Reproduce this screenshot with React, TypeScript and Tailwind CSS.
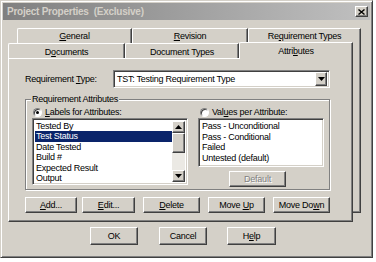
import React from "react";

const raised =
  "border border-t-white border-l-white border-r-[#404040] border-b-[#404040] shadow-[inset_-1px_-1px_0_#808080] bg-[#d4d0c8]";
const sunken =
  "border border-t-[#808080] border-l-[#808080] border-r-white border-b-white shadow-[inset_1px_1px_0_#404040,inset_-1px_-1px_0_#d4d0c8]";

function U({ c }: { c: string }) {
  return <span className="underline underline-offset-[1px] decoration-1">{c}</span>;
}

function Btn({ cls, children, disabled }: { cls: string; children: React.ReactNode; disabled?: boolean }) {
  return (
    <div
      className={`${raised} ${cls} flex items-center justify-center shrink-0 ${
        disabled ? "text-[#808080] [text-shadow:1px_1px_0_#ffffff]" : ""
      }`}
    >
      {children}
    </div>
  );
}

function Radio({ on }: { on?: boolean }) {
  return (
    <div className="w-[9px] h-[9px] rounded-full border border-t-[#808080] border-l-[#808080] border-r-white border-b-white bg-white flex items-center justify-center shrink-0 shadow-[inset_1px_1px_0_#404040]">
      {on ? <div className="w-[3px] h-[3px] rounded-full bg-black" /> : null}
    </div>
  );
}

function TriDown() {
  return (
    <svg width="7" height="4" viewBox="0 0 7 4">
      <polygon points="0,0 7,0 3.5,4" fill="#000" />
    </svg>
  );
}
function TriUp() {
  return (
    <svg width="7" height="4" viewBox="0 0 7 4">
      <polygon points="0,4 7,4 3.5,0" fill="#000" />
    </svg>
  );
}

export default function App() {
  const leftItems = ["Tested By", "Test Status", "Date Tested", "Build #", "Expected Result", "Output"];
  const rightItems = ["Pass - Unconditional", "Pass - Conditional", "Failed", "Untested (default)"];
  return (
    <div className="w-[376px] h-[262px] bg-white font-['Liberation_Sans',Arial,sans-serif] text-[9px] tracking-[-0.25px] text-black leading-none">
      <div className="w-[373px] h-[258px] bg-[#d4d0c8] border border-t-[#d4d0c8] border-l-[#d4d0c8] border-r-[#404040] border-b-[#404040] shadow-[inset_1px_1px_0_#ffffff,inset_-1px_-1px_0_#808080] p-[2px] flex flex-col">
        {/* Title bar */}
        <div className="h-[17px] flex items-center bg-gradient-to-r from-[#808080] to-[#c0c0c0] pl-[4px] pr-[2px]">
          <span className="font-bold text-[10px] text-[#d4d0c8] whitespace-pre flex-1">Project Properties  (Exclusive)</span>
          <div className={`${raised} w-[13px] h-[11px] flex items-center justify-center`}>
            <svg width="7" height="6" viewBox="0 0 7 6">
              <path d="M0.5 0.5 L6.5 5.5 M6.5 0.5 L0.5 5.5" stroke="#000" strokeWidth="1.4" />
            </svg>
          </div>
        </div>

        {/* Tab control */}
        <div className="mt-[8px] ml-[5px] w-[353px] flex flex-col">
          {/* back row */}
          <div className="ml-[9px] flex h-[15px]">
            <div className="w-[115px] h-full border-t border-l border-t-white border-l-white border-r border-r-[#404040] shadow-[inset_-1px_0_0_#808080] rounded-tl-[2px] flex items-center justify-center">
              <span>
                <U c="G" />eneral
              </span>
            </div>
            <div className="w-[116px] h-full border-t border-l border-t-white border-l-white border-r border-r-[#404040] shadow-[inset_-1px_0_0_#808080] rounded-tl-[2px] flex items-center justify-center">
              <span>
                <U c="R" />evision
              </span>
            </div>
            <div className="w-[113px] h-full border-t border-l border-t-white border-l-white border-r border-r-[#404040] shadow-[inset_-1px_0_0_#808080] rounded-tl-[2px] flex items-center justify-center">
              <span>
                Re<U c="q" />uirement Types
              </span>
            </div>
          </div>

          <div className="flex">
            <div className="w-[345px] flex flex-col">
              {/* front row */}
              <div className="flex h-[15px] items-start">
                <div className="w-[117px] h-full border-t border-l border-t-white border-l-white border-r border-r-[#404040] shadow-[inset_-1px_0_0_#808080] rounded-tl-[2px] flex items-center justify-center pt-[2px]">
                  <span>
                    D<U c="o" />cuments
                  </span>
                </div>
                <div className="w-[114px] h-full border-t border-l border-t-white border-l-white border-r border-r-[#404040] shadow-[inset_-1px_0_0_#808080] rounded-tl-[2px] flex items-center justify-center pt-[2px]">
                  <span>Document Types</span>
                </div>
                <div className="relative z-10 w-[114px] h-[17px] -mt-[1px] bg-[#d4d0c8] border-t border-l border-t-white border-l-white border-r border-r-[#404040] shadow-[inset_-1px_0_0_#808080] rounded-tl-[2px] flex items-center justify-center pt-[1px]">
                  <span>
                    Attri<U c="b" />utes
                  </span>
                </div>
              </div>

              {/* panel */}
              <div className="h-[164px] border border-t-white border-l-white border-r-[#404040] border-b-[#404040] shadow-[inset_-1px_-1px_0_#808080] pl-[16px] pt-[11px] flex flex-col">
                {/* requirement type */}
                <div className="flex items-center h-[18px]">
                  <span className="w-[88px]">
                    Requirement <U c="T" />ype:
                  </span>
                  <div className={`${sunken} bg-white w-[217px] h-[18px] flex items-center pl-[3px] pr-[2px]`}>
                    <span className="flex-1">TST: Testing Requirement Type</span>
                    <div className={`${raised} w-[12px] h-[14px] flex items-center justify-center`}>
                      <TriDown />
                    </div>
                  </div>
                </div>

                {/* group box */}
                <div className="relative mt-[11px] w-[305px] h-[91px] border border-[#808080] shadow-[inset_1px_1px_0_#ffffff,1px_1px_0_#ffffff] pl-[6px] pt-[7px] flex">
                  <span className="absolute left-[5px] -top-[6px] bg-[#d4d0c8] px-[1px] leading-[11px]">Requirement Attributes</span>
                  {/* left column */}
                  <div className="w-[156px] flex flex-col">
                    <div className="h-[11px] flex items-center pl-[1px] gap-[3px]">
                      <Radio on />
                      <span>
                        <U c="L" />abels for Attributes:
                      </span>
                    </div>
                    <div className={`${sunken} bg-white h-[67px] p-[2px] flex`}>
                      <div className="flex-1 flex flex-col">
                        {leftItems.map((t, i) => (
                          <div
                            key={t}
                            className={`h-[10.4px] leading-[10.4px] pl-[1px] ${i === 1 ? "bg-[#0a246a] text-white" : ""}`}
                          >
                            {t}
                          </div>
                        ))}
                      </div>
                      <div className="w-[13px] flex flex-col bg-[#ebe9e4]">
                        <div className={`${raised} h-[12px] flex items-center justify-center`}>
                          <TriUp />
                        </div>
                        <div className={`${raised} h-[20px]`} />
                        <div className="flex-1" />
                        <div className={`${raised} h-[12px] flex items-center justify-center`}>
                          <TriDown />
                        </div>
                      </div>
                    </div>
                  </div>
                  {/* right column */}
                  <div className="ml-[10px] w-[126px] flex flex-col">
                    <div className="h-[11px] flex items-center pl-[2px] gap-[3px]">
                      <Radio />
                      <span>
                        Val<U c="u" />es per Attribute:
                      </span>
                    </div>
                    <div className={`${sunken} bg-white h-[49px] p-[2px] flex flex-col`}>
                      {rightItems.map((t) => (
                        <div key={t} className="h-[10.5px] leading-[10.5px] pl-[1px]">
                          {t}
                        </div>
                      ))}
                    </div>
                    <Btn cls="mt-[4px] ml-[31px] w-[57px] h-[16px]" disabled>
                      Default
                    </Btn>
                  </div>
                </div>

                {/* button row */}
                <div className="mt-[7px] flex h-[16px]">
                  <Btn cls="w-[52px] h-[16px]">
                    <span>
                      <U c="A" />dd...
                    </span>
                  </Btn>
                  <Btn cls="ml-[5px] w-[53px] h-[16px]">
                    <span>
                      <U c="E" />dit...
                    </span>
                  </Btn>
                  <Btn cls="ml-[8px] w-[57px] h-[16px]">
                    <span>
                      <U c="D" />elete
                    </span>
                  </Btn>
                  <Btn cls="ml-[8px] w-[57px] h-[16px]">
                    <span>
                      Move <U c="U" />p
                    </span>
                  </Btn>
                  <Btn cls="ml-[8px] w-[57px] h-[16px]">
                    <span>
                      Move Do<U c="w" />n
                    </span>
                  </Btn>
                </div>
              </div>
            </div>
            {/* stacked back page edge */}
            <div className="w-[8px] h-[170px] border-r border-b border-r-[#404040] border-b-[#404040] shadow-[inset_-1px_-1px_0_#808080]" />
          </div>
        </div>

        {/* dialog buttons */}
        <div className="mt-[5px] flex h-[18px] pl-[87px]">
          <Btn cls="w-[48px] h-[18px]">OK</Btn>
          <Btn cls="ml-[21px] w-[48px] h-[18px]">Cancel</Btn>
          <Btn cls="ml-[20px] w-[49px] h-[18px]">
            <span>
              H<U c="e" />lp
            </span>
          </Btn>
        </div>
      </div>
    </div>
  );
}
